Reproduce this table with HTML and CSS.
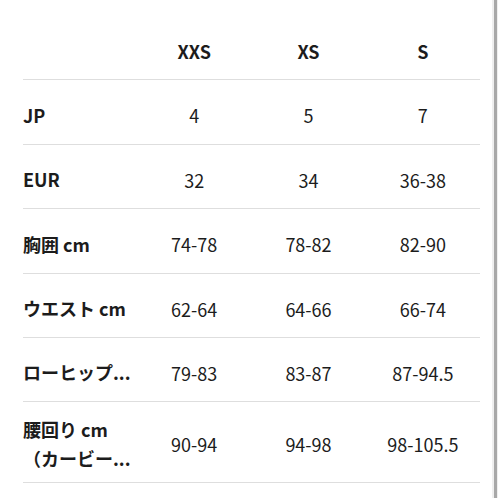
FILE: index.html
```html
<!DOCTYPE html>
<html lang="ja">
<head>
<meta charset="utf-8">
<link rel="stylesheet" href="styles.css">
</head>
<body>
<div class="page">
  <div class="content">
    <div class="table">
      <div class="row head">
        <div class="label"></div>
        <div class="cell">XXS</div>
        <div class="cell">XS</div>
        <div class="cell">S</div>
      </div>
      <div class="row r65">
        <div class="label">JP</div>
        <div class="cell">4</div>
        <div class="cell">5</div>
        <div class="cell">7</div>
      </div>
      <div class="row">
        <div class="label">EUR</div>
        <div class="cell">32</div>
        <div class="cell">34</div>
        <div class="cell">36-38</div>
      </div>
      <div class="row r65">
        <div class="label">胸囲 cm</div>
        <div class="cell">74-78</div>
        <div class="cell">78-82</div>
        <div class="cell">82-90</div>
      </div>
      <div class="row">
        <div class="label">ウエスト cm</div>
        <div class="cell">62-64</div>
        <div class="cell">64-66</div>
        <div class="cell">66-74</div>
      </div>
      <div class="row">
        <div class="label">ローヒップ...</div>
        <div class="cell">79-83</div>
        <div class="cell">83-87</div>
        <div class="cell">87-94.5</div>
      </div>
      <div class="row tall">
        <div class="label">腰回り cm<br>（カービー...</div>
        <div class="cell">90-94</div>
        <div class="cell">94-98</div>
        <div class="cell">98-105.5</div>
      </div>
    </div>
  </div>
  <div class="scrollbar"><div class="thumb"></div></div>
</div>
</body>
</html>
```

FILE: styles.css
```css
html, body {
  margin: 0;
  padding: 0;
  background: #ffffff;
}
body {
  font-family: "Noto Sans CJK JP", "Noto Sans", sans-serif;
  color: #1c1c1c;
  font-size: 18px;
}
.page {
  display: flex;
  width: 498px;
  height: 498px;
  overflow: hidden;
}
.content {
  flex: 1;
  padding-left: 23px;
}
.table {
  width: 457px;
}
.row {
  display: grid;
  grid-template-columns: 114px repeat(3, 1fr);
  align-items: center;
  height: 64px;
  padding-top: 6px;
  box-sizing: border-box;
  border-bottom: 1px solid #dedede;
}
.row.r65 {
  height: 65px;
}
.row.head {
  height: 80px;
  padding-top: 22px;
  font-weight: 700;
}
.row.tall {
  height: 81px;
  padding-top: 4px;
}
.label {
  font-weight: 700;
  line-height: 29px;
  white-space: nowrap;
}
.cell {
  text-align: center;
  line-height: 26px;
}
.scrollbar {
  width: 6px;
  height: 498px;
  background: #efefef;
  display: flex;
  justify-content: center;
}
.thumb {
  width: 3px;
  height: 100%;
  background: #a8a8a8;
}
```
